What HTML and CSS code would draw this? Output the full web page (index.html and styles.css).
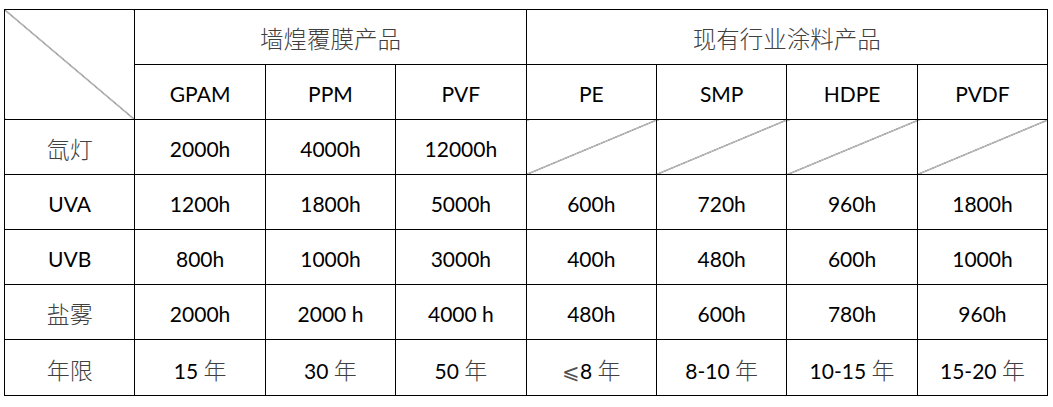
FILE: index.html
```html
<!DOCTYPE html>
<html lang="zh-CN">
<head>
<meta charset="utf-8">
<title>性能对比</title>
<link rel="stylesheet" href="styles.css">
</head>
<body>
<table class="grid">
  <colgroup>
    <col><col><col><col><col><col><col><col>
  </colgroup>
  <tr class="row">
    <td class="corner" rowspan="2"></td>
    <td class="cjk group" colspan="3">墙煌覆膜产品</td>
    <td class="cjk group" colspan="4">现有行业涂料产品</td>
  </tr>
  <tr class="row">
    <td>GPAM</td><td>PPM</td><td>PVF</td><td>PE</td><td>SMP</td><td>HDPE</td><td>PVDF</td>
  </tr>
  <tr class="row">
    <td class="cjk label">氙灯</td>
    <td>2000h</td><td>4000h</td><td>12000h</td>
    <td class="slash"></td><td class="slash"></td><td class="slash"></td><td class="slash"></td>
  </tr>
  <tr class="row">
    <td>UVA</td>
    <td>1200h</td><td>1800h</td><td>5000h</td><td>600h</td><td>720h</td><td>960h</td><td>1800h</td>
  </tr>
  <tr class="row">
    <td>UVB</td>
    <td>800h</td><td>1000h</td><td>3000h</td><td>400h</td><td>480h</td><td>600h</td><td>1000h</td>
  </tr>
  <tr class="row">
    <td class="cjk label">盐雾</td>
    <td>2000h</td><td>2000 h</td><td>4000 h</td><td>480h</td><td>600h</td><td>780h</td><td>960h</td>
  </tr>
  <tr class="row last">
    <td class="cjk label">年限</td>
    <td>15 <span class="cjk">年</span></td>
    <td>30 <span class="cjk">年</span></td>
    <td>50 <span class="cjk">年</span></td>
    <td><span class="sym">⩽</span>8 <span class="cjk">年</span></td>
    <td>8-10 <span class="cjk">年</span></td>
    <td>10-15 <span class="cjk">年</span></td>
    <td>15-20 <span class="cjk">年</span></td>
  </tr>
</table>
</body>
</html>
```

FILE: styles.css
```css
html, body {
  margin: 0;
  padding: 0;
  background: #ffffff;
}

body {
  padding: 9px 0 0 4px;
  font-family: "Lato", "Open Sans", "Noto Sans CJK SC", sans-serif;
  font-size: 21px;
  color: #000000;
}

.grid {
  border-collapse: collapse;
  table-layout: fixed;
  width: 1044px;
}

.grid col {
  width: 130.4px;
}

.grid td {
  border: 1px solid #000000;
  text-align: center;
  vertical-align: middle;
  padding: 2px 0 0 0;
  white-space: nowrap;
}

.row {
  height: 55px;
}

.row.last {
  height: 56px;
}

.cjk {
  font-family: "Noto Sans CJK SC", sans-serif;
  font-weight: 300;
  font-size: 23px;
  color: #404040;
}

.group {
  font-size: 23.5px;
}

.sym {
  font-family: "DejaVu Sans", "Noto Sans CJK SC", sans-serif;
  font-weight: 300;
  font-size: 21px;
  color: #505050;
}

.corner {
  background: linear-gradient(to top right,
    transparent calc(50% - 0.6px),
    #1a1a1a 50%,
    transparent calc(50% + 0.6px));
}

.slash {
  background: linear-gradient(to bottom right,
    transparent calc(50% - 0.6px),
    #1a1a1a 50%,
    transparent calc(50% + 0.6px));
}
```
